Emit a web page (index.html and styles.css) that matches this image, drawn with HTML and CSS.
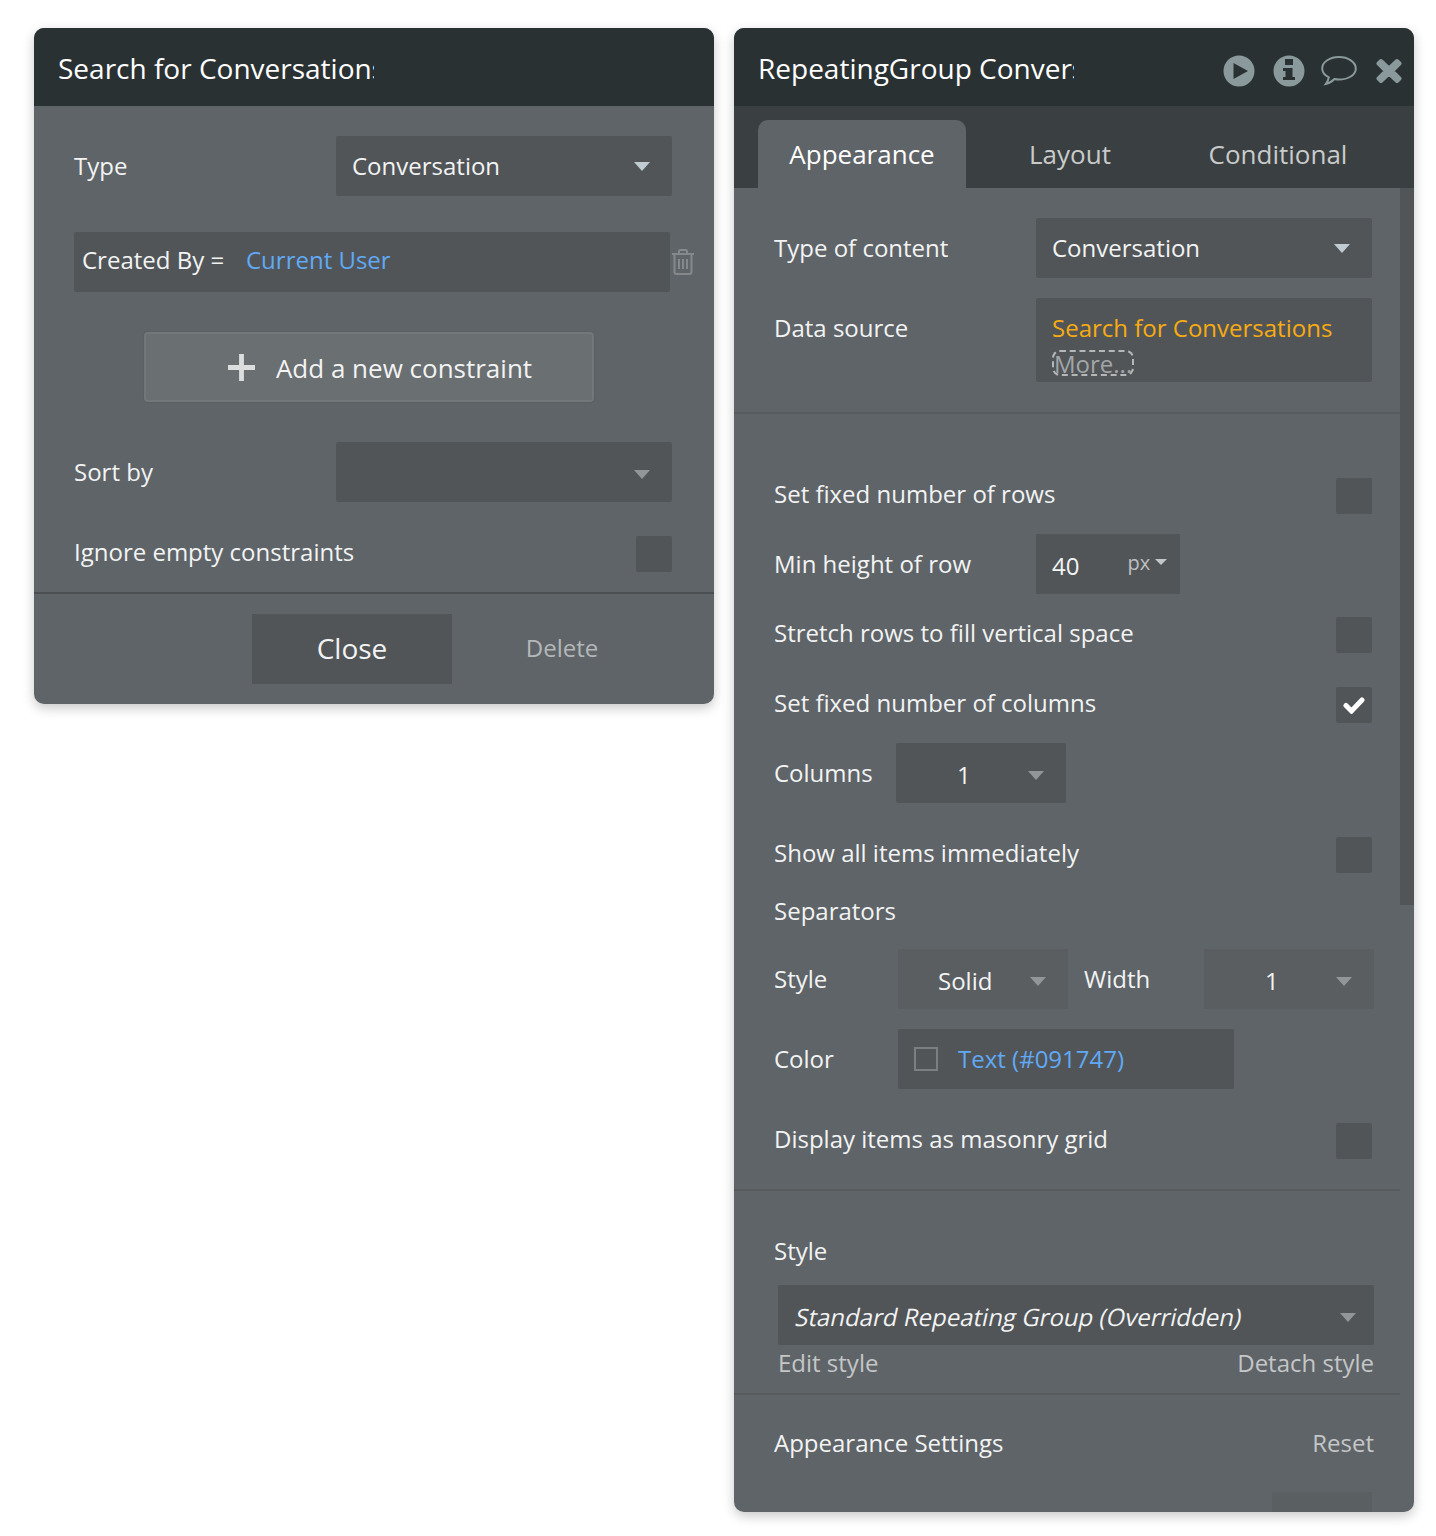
FILE: index.html
```html
<!DOCTYPE html>
<html lang="en">
<head>
<meta charset="utf-8">
<title>Property editors</title>
<link rel="stylesheet" href="styles.css">
</head>
<body>
<main class="stage">
  <section class="panel panel-left">
    <header class="head"><h1 class="title">Search for Conversations</h1></header>
    <div class="left-body">
      <div class="row left-type"><span class="label">Type</span>
        <div class="select select-left"><span>Conversation</span><i class="caret"></i></div></div>
      <div class="constraint-row">
        <div class="constraint"><span class="c-key">Created By =</span><span class="blue">Current User</span></div>
        <svg class="trash" viewBox="0 0 24 28" aria-hidden="true"><path d="M1 6h22M8 6V3.500C8 2.500 8.700 2 9.500 2h5c.8 0 1.500.5 1.500 1.500V6M3.500 6v18c0 1 .7 2 2 2h13c1.300 0 2-1 2-2V6" fill="none" stroke="#85898c" stroke-width="2"/><path d="M8 11v10M12 11v10M16 11v10" fill="none" stroke="#85898c" stroke-width="2"/></svg>
      </div>
      <div class="add-btn"><svg class="plus" viewBox="0 0 28 28" aria-hidden="true"><path d="M11.500 0h5v11.500H28v5H16.500V28h-5V16.500H0v-5h11.500z" fill="#dcdddd"/></svg><span>Add a new constraint</span></div>
      <div class="row left-sort"><span class="label">Sort by</span>
        <div class="select select-left"><span></span><i class="caret caret-dim"></i></div></div>
      <div class="row left-ignore has-check"><span class="label">Ignore empty constraints</span><div class="check"></div></div>
    </div>
    <footer class="foot">
      <div class="close">Close</div>
      <div class="delete">Delete</div>
    </footer>
  </section>

  <section class="panel panel-right">
    <header class="head">
      <h1 class="title">RepeatingGroup Conversations</h1>
      <div class="head-icons">
        <svg viewBox="0 0 32 32" aria-hidden="true"><path fill-rule="evenodd" d="M16 .500a15.500 15.500 0 1 1 0 31 15.500 15.500 0 0 1 0-31zM10.500 8v16L25 16z" fill="#8a9a9c"/></svg>
        <svg viewBox="0 0 32 32" aria-hidden="true"><path fill-rule="evenodd" d="M16 .500a15.500 15.500 0 1 1 0 31 15.500 15.500 0 0 1 0-31zM12 4v6h8V4zM10 13v3h2.500v6H10v3h12v-3h-2.500V13z" fill="#8a9a9c"/></svg>
        <svg class="bubble" viewBox="0 0 36 32" aria-hidden="true"><path d="M18 2C9 2 1.200 6.800 1.200 13.500c0 3.700 2.600 6.900 6.600 8.900-.3 2.300-1.200 4.300-3 6.600 3.700-.7 6.800-3.100 8.600-5 1.400.3 3 .5 4.600.5 9 0 16.800-4.300 16.800-11C34.800 7 27 2 18 2z" fill="none" stroke="#8a9a9c" stroke-width="2"/></svg>
        <svg class="cross" viewBox="0 0 26 26" aria-hidden="true"><path d="M5 3 13 10.500 21 3 23.500 5.500 16 13l7.500 7.500L21 23 13 15.500 5 23 2.500 20.500 10 13 2.500 5.500z" fill="#8a9a9c" stroke="#8a9a9c" stroke-width="4" stroke-linejoin="round"/></svg>
      </div>
    </header>
    <nav class="tabs">
      <div class="tab active">Appearance</div>
      <div class="tab">Layout</div>
      <div class="tab">Conditional</div>
    </nav>
    <div class="right-body">
      <div class="scroll-thumb"></div>
      <div class="scroll-content">
        <div class="row r-content"><span class="label">Type of content</span>
          <div class="select select-right"><span>Conversation</span><i class="caret"></i></div></div>
        <div class="row r-source"><span class="label source-label">Data source</span>
          <div class="source"><div class="orange">Search for Conversations</div><div class="more">More...</div></div></div>
        <hr class="rule rule-a">
        <div class="row r-fixedrows has-check"><span class="label">Set fixed number of rows</span><div class="check"></div></div>
        <div class="row r-minh"><span class="label">Min height of row</span>
          <div class="minh"><span class="minh-value">40</span><span class="px">px</span><i class="caret caret-sm"></i></div></div>
        <div class="row r-stretch has-check"><span class="label">Stretch rows to fill vertical space</span><div class="check"></div></div>
        <div class="row r-fixedcols has-check"><span class="label">Set fixed number of columns</span>
          <div class="check"><svg class="tick" viewBox="0 0 22 18" aria-hidden="true"><path d="M3 9.500 8.500 15 19 4" fill="none" stroke="#fff" stroke-width="5" stroke-linecap="round"/></svg></div></div>
        <div class="row r-cols"><span class="label">Columns</span>
          <div class="select select-cols select-low"><span>1</span><i class="caret caret-dim"></i></div></div>
        <div class="row r-showall has-check"><span class="label">Show all items immediately</span><div class="check"></div></div>
        <div class="label r-sep">Separators</div>
        <div class="row r-style"><span class="label short">Style</span>
          <div class="select select-solid select-faint select-low"><span>Solid</span><i class="caret caret-dim"></i></div>
          <span class="label width-label">Width</span>
          <div class="select select-width select-faint select-low"><span>1</span><i class="caret caret-dim"></i></div></div>
        <div class="row r-color"><span class="label short">Color</span>
          <div class="color"><i class="swatch"></i><span class="blue">Text (#091747)</span></div></div>
        <div class="row r-masonry has-check"><span class="label">Display items as masonry grid</span><div class="check"></div></div>
        <hr class="rule rule-b">
        <div class="label r-stylelabel">Style</div>
        <div class="select style-select"><span class="slanted">Standard Repeating Group (Overridden)</span><i class="caret caret-dim"></i></div>
        <div class="style-links"><span>Edit style</span><span>Detach style</span></div>
        <hr class="rule rule-c">
        <div class="row r-appearance"><span class="label">Appearance Settings</span><span class="reset">Reset</span></div>
        <div class="clipped"></div>
      </div>
    </div>
  </section>
</main>
</body>
</html>
```
FILE: styles.css
```css
* { box-sizing: border-box; }
html, body { margin: 0; padding: 0; background: #fff; }
body { font-family: "Open Sans", "Liberation Sans", sans-serif; font-size: 24px; color: #f2f3f3; }
.stage { display: flex; align-items: flex-start; gap: 20px; padding: 28px 22px 24px 34px; height: 1536px; overflow: hidden; }
.panel { width: 680px; background: #5f6468; border-radius: 10px; overflow: hidden; box-shadow: 0 4px 12px rgba(0,0,0,.22); display: flex; flex-direction: column; flex: none; }
.panel-left { height: 676px; }
.panel-right { height: 1484px; }
.head { height: 78px; flex: none; background: #2a3133; display: flex; align-items: center; padding-left: 24px; }
.title { margin: 2px 0 0; width: 316px; overflow: hidden; white-space: nowrap; font-size: 28px; line-height: 38px; font-weight: 400; color: #fff; }
.head-icons { margin-left: auto; display: flex; align-items: center; padding-top: 7px; }
.head-icons svg { width: 32px; height: 32px; margin-right: 18px; flex: none; }
.head-icons .bubble { width: 36px; margin-left: -2px; margin-right: 19px; }
.head-icons .cross { width: 26px; height: 26px; margin-right: 12px; }

.label { line-height: 34px; white-space: nowrap; }
.row { display: flex; align-items: center; justify-content: space-between; }
.has-check .label { margin-top: -2px; margin-bottom: 2px; }
.select { height: 60px; background: #515558; border-radius: 2px; display: flex; align-items: center; position: relative; white-space: nowrap; }
.select > span:first-child { margin-bottom: 1px; }
.select-low > span:first-child { margin-top: 2px; margin-bottom: 0; }
.select-faint { background: #5a5e61; }
.caret { width: 0; height: 0; border-left: 8.500px solid transparent; border-right: 8.500px solid transparent; border-top: 9px solid #c0ccd2; flex: none; margin-left: auto; }
.caret-dim { border-top-color: #929699; margin-top: 4px; }
.caret-sm { border-left-width: 6px; border-right-width: 6px; border-top-width: 6px; border-top-color: #c4c6c7; margin-left: 5px; margin-bottom: 4px; }
.blue { color: #60a9f5; }
.orange { color: #f6ab13; }

.left-body { padding: 30px 42px 0 40px; flex: 1; }
.select-left { width: 336px; padding: 0 22px 0 16px; }
.constraint-row { display: flex; align-items: center; margin-top: 36px; width: 622px; }
.constraint { width: 596px; height: 60px; background: #515558; border-radius: 2px; display: flex; align-items: center; padding: 0 0 5px 8px; }
.c-key { width: 164px; }
.trash { width: 24px; height: 28px; margin-left: 1px; flex: none; }
.add-btn { width: 450px; height: 70px; margin: 40px 0 0 70px; background: #6a6f72; border: 2px solid #72777a; border-radius: 4px; display: flex; align-items: center; justify-content: center; font-size: 26px; box-shadow: 0 0 2px rgba(0,0,0,.15); padding-left: 22px; }
.add-btn span { margin-top: 1px; }
.plus { width: 27px; height: 27px; margin-right: 21px; margin-top: 1px; }
.left-sort { margin-top: 40px; }
.left-ignore { margin-top: 34px; }
.check { width: 36px; height: 36px; background: #515558; border-radius: 2px; display: flex; align-items: center; justify-content: center; flex: none; }
.tick { width: 22px; height: 18px; }
.foot { height: 112px; flex: none; border-top: 2px solid #4b4f52; display: flex; padding: 20px 0 0 218px; }
.close { width: 200px; height: 70px; background: #515558; display: flex; align-items: center; justify-content: center; font-size: 28px; padding-bottom: 2px; }
.delete { width: 220px; height: 70px; display: flex; align-items: center; justify-content: center; color: #b4b7b8; padding-bottom: 4px; }

.tabs { height: 82px; flex: none; background: #3a3f41; display: flex; align-items: flex-end; padding-left: 24px; }
.tab { width: 208px; height: 68px; display: flex; align-items: center; justify-content: center; font-size: 26px; color: #c9cbcb; padding-bottom: 1px; }
.tab.active { background: #5f6468; color: #fff; border-radius: 10px 10px 0 0; }
.right-body { flex: 1; position: relative; overflow: hidden; min-height: 0; }
.scroll-thumb { position: absolute; right: 0; top: 0; width: 14px; height: 717px; background: #515558; }
.scroll-content { width: 666px; padding: 30px 0 0 40px; }
.scroll-content > .row { width: 598px; }
.select-right { width: 336px; padding: 0 22px 0 16px; }
.r-source { margin-top: 20px; align-items: flex-start; }
.source-label { margin-top: 13px; }
.source { width: 336px; height: 84px; background: #515558; border-radius: 2px; padding: 13px 16px 0; overflow: hidden; line-height: 34px; }
.more { width: 82px; height: 26px; margin-top: 5px; border: 2px dashed #b4b7b8; border-radius: 8px; color: #a3a6a8; line-height: 24px; white-space: nowrap; }
.rule { border: 0; height: 2px; background: #575b5e; margin: 0 0 0 -40px; }
.rule-a { margin-top: 30px; }
.r-fixedrows { margin-top: 64px; }
.r-minh { margin-top: 20px; justify-content: flex-start; }
.r-minh .label { width: 262px; flex: none; }
.minh { width: 144px; height: 60px; background: #515558; display: flex; align-items: center; padding-left: 16px; border-radius: 2px; }
.minh-value { margin-top: 2px; }
.px { margin-left: 48px; font-size: 20px; color: #bdbfc0; margin-bottom: 3px; }
.r-stretch { margin-top: 23px; }
.r-fixedcols { margin-top: 34px; }
.r-cols { margin-top: 20px; justify-content: flex-start; }
.r-cols .label { width: 122px; flex: none; }
.select-cols { width: 170px; padding: 0 22px 0 61px; }
.r-showall { margin-top: 34px; }
.r-sep { margin-top: 21px; }
.r-style { margin-top: 21px; justify-content: flex-start; width: 600px !important; }
.short { width: 124px; flex: none; }
.select-solid { width: 170px; padding: 0 22px 0 40px; }
.width-label { margin-left: 16px; width: 120px; flex: none; }
.select-width { width: 170px; padding: 0 22px 0 61px; }
.r-color { margin-top: 20px; justify-content: flex-start; }
.color { width: 336px; height: 60px; background: #515558; border-radius: 2px; display: flex; align-items: center; padding-left: 16px; }
.color .blue { margin-bottom: 2px; }
.swatch { width: 24px; height: 24px; border: 2px solid #7b7f82; margin-right: 20px; flex: none; }
.r-masonry { margin-top: 34px; }
.rule-b { margin-top: 30px; }
.r-stylelabel { margin-top: 44px; position: relative; top: -1px; }
.style-select { width: 596px; margin: 16px 0 0 4px; padding: 0 18px 0 18px; }
.select > .slanted { display: inline-block; transform: skewX(-12deg); margin: 3px 0 0; }
.style-links { width: 596px; margin: 1px 0 0 4px; display: flex; justify-content: space-between; color: #c4c6c7; line-height: 34px; }
.rule-c { margin-top: 13px; }
.r-appearance { margin-top: 31px; width: 600px !important; }
.r-appearance .label { margin-top: -1px; margin-bottom: 1px; }
.reset { color: #c4c6c7; margin-bottom: 2px; }
.clipped { width: 100px; height: 30px; margin: 31px 0 0 498px; background: #5a5f62; }
```
